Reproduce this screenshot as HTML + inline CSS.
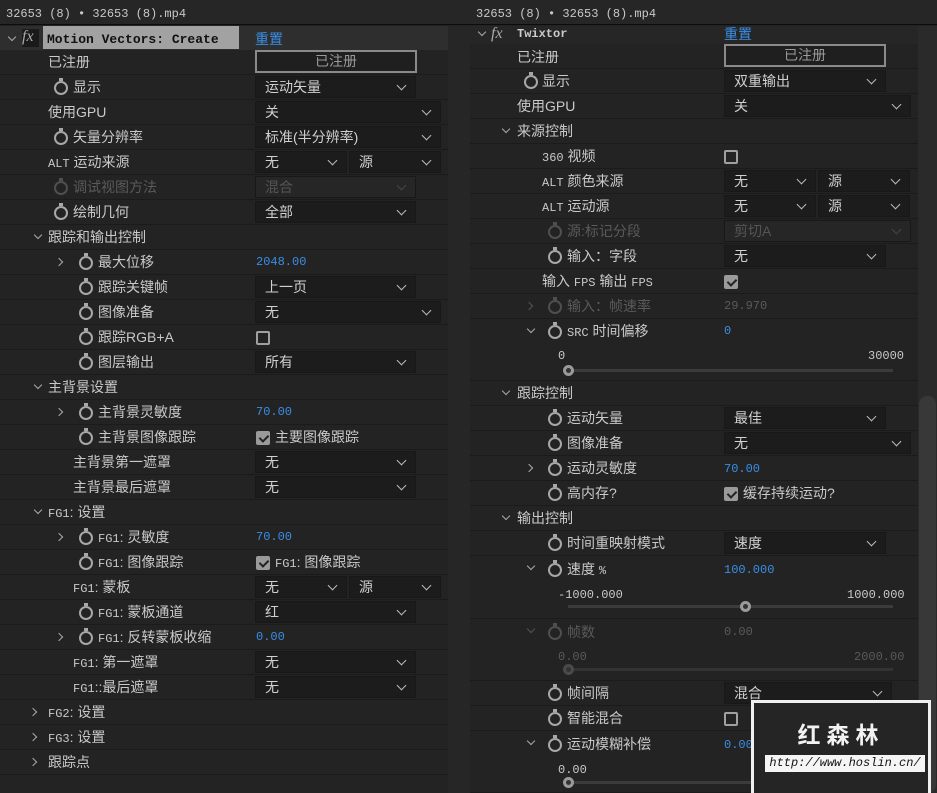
<!DOCTYPE html>
<html><head><meta charset="utf-8"><style>
*{margin:0;padding:0;box-sizing:border-box}
body{width:937px;height:793px;background:#232323;position:relative;overflow:hidden;font-family:"Liberation Sans","Noto Sans CJK SC",sans-serif;font-size:14px;color:#c9c9c9}
.a{position:absolute}
.r{position:absolute;height:25px;border-bottom:1px solid #1b1b1b;background:#232323}
.t{position:absolute;height:24px;line-height:24px;white-space:nowrap}
.m{font-family:"Liberation Mono","Noto Sans CJK SC",monospace;font-size:12px}
.dim{color:#5a5a5a}
.blue{color:#3a8ee6}
.sw{position:absolute;width:14px;height:14px;border:2px solid #a8a8a8;border-radius:50%}
.sw:before{content:"";position:absolute;left:3px;top:-5px;width:4px;height:3px;background:#a8a8a8}
.sw.dim{border-color:#4f4f4f}.sw.dim:before{background:#4f4f4f}
.cd{position:absolute;width:6px;height:6px;border-right:1px solid #aaa;border-bottom:1px solid #aaa;transform:rotate(45deg)}
.cr{position:absolute;width:6px;height:6px;border-right:1px solid #aaa;border-bottom:1px solid #aaa;transform:rotate(-45deg)}
.dd{position:absolute;height:22px;background:#1c1c1c;border:1px solid #181818;line-height:20px;padding-left:9px;color:#d0d0d0}
.dd:after{content:"";position:absolute;right:10px;top:5px;width:6px;height:6px;border-right:1px solid #bbb;border-bottom:1px solid #bbb;transform:rotate(45deg)}
.dd.dim{color:#555;background:#262626}.dd.dim:after{border-color:#444}
.btn{position:absolute;height:23px;border:2px solid #8a8a8a;background:#1f1f1f;text-align:center;line-height:19px;color:#9a9a9a}
.cb{position:absolute;width:14px;height:14px;border:2px solid #a0a0a0;border-radius:2px}
.cb.on{background:#9a9a9a;border-color:#9a9a9a}
.cb.on:after{content:"";position:absolute;left:3px;top:0px;width:4px;height:7px;border-right:2px solid #222;border-bottom:2px solid #222;transform:rotate(45deg)}
.track{position:absolute;height:3px;background:#3b3b3b}
.knob{position:absolute;width:11px;height:11px;border:3px solid #9a9a9a;border-radius:50%;background:#333}
</style></head><body>
<div class="a" style="left:0;top:0;width:937px;height:25px;background:#262626;border-bottom:1px solid #0c0c0c"></div>
<div class="t m" style="left:6px;top:2px;color:#c8c8c8">32653 (8) • 32653 (8).mp4</div>
<div class="t m" style="left:476px;top:2px;color:#c8c8c8">32653 (8) • 32653 (8).mp4</div>
<div class="a" style="left:448px;top:26px;width:22px;height:767px;background:#262626"></div>
<div class="a" style="left:918px;top:26px;width:19px;height:767px;background:#2a2a2a"></div>
<div class="a" style="left:919px;top:396px;width:17px;height:397px;background:#383838;border-radius:8px"></div>

<div class="a" style="left:0;top:26px;width:448px;height:24px;background:#2e2e2e"></div>
<div class="cd" style="left:9px;top:34px"></div>
<div class="a" style="left:22px;top:29px;width:17px;height:18px;background:#1a1a1a;color:#aaa;font-style:italic;font-family:'Liberation Serif',serif;font-size:16px;line-height:16px">fx</div>
<div class="a" style="left:43px;top:26px;width:196px;height:23px;background:#a2a2a2"></div>
<div class="t" style="left:47px;top:28px;color:#111;font-family:'Liberation Mono',monospace;font-weight:bold;font-size:13px">Motion Vectors: Create</div>
<div class="t blue" style="left:255px;top:27px;font-size:14px">重置</div>

<div class="r" style="left:0;top:50px;width:448px"></div>
<div class="r" style="left:0;top:75px;width:448px"></div>
<div class="r" style="left:0;top:100px;width:448px"></div>
<div class="r" style="left:0;top:125px;width:448px"></div>
<div class="r" style="left:0;top:150px;width:448px"></div>
<div class="r" style="left:0;top:175px;width:448px"></div>
<div class="r" style="left:0;top:200px;width:448px"></div>
<div class="r" style="left:0;top:225px;width:448px"></div>
<div class="r" style="left:0;top:250px;width:448px"></div>
<div class="r" style="left:0;top:275px;width:448px"></div>
<div class="r" style="left:0;top:300px;width:448px"></div>
<div class="r" style="left:0;top:325px;width:448px"></div>
<div class="r" style="left:0;top:350px;width:448px"></div>
<div class="r" style="left:0;top:375px;width:448px"></div>
<div class="r" style="left:0;top:400px;width:448px"></div>
<div class="r" style="left:0;top:425px;width:448px"></div>
<div class="r" style="left:0;top:450px;width:448px"></div>
<div class="r" style="left:0;top:475px;width:448px"></div>
<div class="r" style="left:0;top:500px;width:448px"></div>
<div class="r" style="left:0;top:525px;width:448px"></div>
<div class="r" style="left:0;top:550px;width:448px"></div>
<div class="r" style="left:0;top:575px;width:448px"></div>
<div class="r" style="left:0;top:600px;width:448px"></div>
<div class="r" style="left:0;top:625px;width:448px"></div>
<div class="r" style="left:0;top:650px;width:448px"></div>
<div class="r" style="left:0;top:675px;width:448px"></div>
<div class="r" style="left:0;top:700px;width:448px"></div>
<div class="r" style="left:0;top:725px;width:448px"></div>
<div class="r" style="left:0;top:750px;width:448px"></div>

<div class="t" style="left:48px;top:50px">已注册</div><div class="btn" style="left:255px;top:50px;width:162px">已注册</div>
<div class="sw" style="left:54px;top:81px"></div><div class="t" style="left:73px;top:75px">显示</div><div class="dd" style="left:255px;top:76px;width:161px">运动矢量</div>
<div class="t" style="left:48px;top:100px">使用GPU</div><div class="dd" style="left:255px;top:101px;width:186px">关</div>
<div class="sw" style="left:54px;top:131px"></div><div class="t" style="left:73px;top:125px">矢量分辨率</div><div class="dd" style="left:255px;top:126px;width:186px">标准(半分辨率)</div>
<div class="t" style="left:48px;top:150px"><span class="m">ALT</span> 运动来源</div><div class="dd" style="left:255px;top:151px;width:92px">无</div><div class="dd" style="left:349px;top:151px;width:92px">源</div>
<div class="sw dim" style="left:54px;top:181px"></div><div class="t dim" style="left:73px;top:175px">调试视图方法</div><div class="dd dim" style="left:255px;top:176px;width:161px">混合</div>
<div class="sw" style="left:54px;top:206px"></div><div class="t" style="left:73px;top:200px">绘制几何</div><div class="dd" style="left:255px;top:201px;width:161px">全部</div>
<div class="cd" style="left:35px;top:232px"></div><div class="t" style="left:48px;top:225px">跟踪和输出控制</div>
<div class="cr" style="left:56px;top:259px"></div><div class="sw" style="left:79px;top:256px"></div><div class="t" style="left:98px;top:250px">最大位移</div><div class="t blue m" style="left:256px;top:250px">2048.00</div>
<div class="sw" style="left:79px;top:281px"></div><div class="t" style="left:98px;top:275px">跟踪关键帧</div><div class="dd" style="left:255px;top:276px;width:161px">上一页</div>
<div class="sw" style="left:79px;top:306px"></div><div class="t" style="left:98px;top:300px">图像准备</div><div class="dd" style="left:255px;top:301px;width:186px">无</div>
<div class="sw" style="left:79px;top:331px"></div><div class="t" style="left:98px;top:325px">跟踪RGB+A</div><div class="cb" style="left:256px;top:331px"></div>
<div class="sw" style="left:79px;top:356px"></div><div class="t" style="left:98px;top:350px">图层输出</div><div class="dd" style="left:255px;top:351px;width:161px">所有</div>
<div class="cd" style="left:35px;top:382px"></div><div class="t" style="left:48px;top:375px">主背景设置</div>
<div class="cr" style="left:56px;top:409px"></div><div class="sw" style="left:79px;top:406px"></div><div class="t" style="left:98px;top:400px">主背景灵敏度</div><div class="t blue m" style="left:256px;top:400px">70.00</div>
<div class="sw" style="left:79px;top:431px"></div><div class="t" style="left:98px;top:425px">主背景图像跟踪</div><div class="cb on" style="left:256px;top:431px"></div><div class="t" style="left:275px;top:425px">主要图像跟踪</div>
<div class="t" style="left:73px;top:450px">主背景第一遮罩</div><div class="dd" style="left:255px;top:451px;width:161px">无</div>
<div class="t" style="left:73px;top:475px">主背景最后遮罩</div><div class="dd" style="left:255px;top:476px;width:161px">无</div>
<div class="cd" style="left:35px;top:507px"></div><div class="t" style="left:48px;top:500px"><span class="m">FG1</span>: 设置</div>
<div class="cr" style="left:56px;top:534px"></div><div class="sw" style="left:79px;top:531px"></div><div class="t" style="left:98px;top:525px"><span class="m">FG1</span>: 灵敏度</div><div class="t blue m" style="left:256px;top:525px">70.00</div>
<div class="sw" style="left:79px;top:556px"></div><div class="t" style="left:98px;top:550px"><span class="m">FG1</span>: 图像跟踪</div><div class="cb on" style="left:256px;top:556px"></div><div class="t" style="left:275px;top:550px"><span class="m">FG1</span>: 图像跟踪</div>
<div class="t" style="left:73px;top:575px"><span class="m">FG1</span>: 蒙板</div><div class="dd" style="left:255px;top:576px;width:92px">无</div><div class="dd" style="left:349px;top:576px;width:92px">源</div>
<div class="sw" style="left:79px;top:606px"></div><div class="t" style="left:98px;top:600px"><span class="m">FG1</span>: 蒙板通道</div><div class="dd" style="left:255px;top:601px;width:161px">红</div>
<div class="cr" style="left:56px;top:634px"></div><div class="sw" style="left:79px;top:631px"></div><div class="t" style="left:98px;top:625px"><span class="m">FG1</span>: 反转蒙板收缩</div><div class="t blue m" style="left:256px;top:625px">0.00</div>
<div class="t" style="left:73px;top:650px"><span class="m">FG1</span>: 第一遮罩</div><div class="dd" style="left:255px;top:651px;width:161px">无</div>
<div class="t" style="left:73px;top:675px"><span class="m">FG1</span>::最后遮罩</div><div class="dd" style="left:255px;top:676px;width:161px">无</div>
<div class="cr" style="left:30px;top:709px"></div><div class="t" style="left:48px;top:700px"><span class="m">FG2</span>: 设置</div>
<div class="cr" style="left:30px;top:734px"></div><div class="t" style="left:48px;top:725px"><span class="m">FG3</span>: 设置</div>
<div class="cr" style="left:30px;top:759px"></div><div class="t" style="left:48px;top:750px">跟踪点</div>

<div class="a" style="left:470px;top:26px;width:448px;height:18px;background:#262626"></div>
<div class="cd" style="left:479px;top:29px"></div>
<div class="a" style="left:491px;top:26px;width:16px;height:16px;color:#aaa;font-style:italic;font-family:'Liberation Serif',serif;font-size:16px;line-height:15px">fx</div>
<div class="a" style="left:517px;top:25px;height:18px;line-height:18px;color:#ccc;font-family:'Liberation Mono',monospace;font-weight:bold;font-size:12px">Twixtor</div>
<div class="a blue" style="left:724px;top:24px;font-size:14px;line-height:20px">重置</div>

<div class="r" style="left:470px;top:44px;width:448px"></div>
<div class="r" style="left:470px;top:69px;width:448px"></div>
<div class="r" style="left:470px;top:94px;width:448px"></div>
<div class="r" style="left:470px;top:119px;width:448px"></div>
<div class="r" style="left:470px;top:144px;width:448px"></div>
<div class="r" style="left:470px;top:169px;width:448px"></div>
<div class="r" style="left:470px;top:194px;width:448px"></div>
<div class="r" style="left:470px;top:219px;width:448px"></div>
<div class="r" style="left:470px;top:244px;width:448px"></div>
<div class="r" style="left:470px;top:269px;width:448px"></div>
<div class="r" style="left:470px;top:294px;width:448px"></div>
<div class="r" style="left:470px;top:319px;width:448px;height:62px"></div>
<div class="r" style="left:470px;top:381px;width:448px"></div>
<div class="r" style="left:470px;top:406px;width:448px"></div>
<div class="r" style="left:470px;top:431px;width:448px"></div>
<div class="r" style="left:470px;top:456px;width:448px"></div>
<div class="r" style="left:470px;top:481px;width:448px"></div>
<div class="r" style="left:470px;top:506px;width:448px"></div>
<div class="r" style="left:470px;top:531px;width:448px"></div>
<div class="r" style="left:470px;top:556px;width:448px;height:63px"></div>
<div class="r" style="left:470px;top:619px;width:448px;height:62px"></div>
<div class="r" style="left:470px;top:681px;width:448px"></div>
<div class="r" style="left:470px;top:706px;width:448px"></div>
<div class="r" style="left:470px;top:731px;width:448px;height:62px"></div>

<div class="t" style="left:517px;top:45px">已注册</div><div class="btn" style="left:724px;top:44px;width:162px">已注册</div>
<div class="sw" style="left:524px;top:75px"></div><div class="t" style="left:542px;top:69px">显示</div><div class="dd" style="left:724px;top:70px;width:162px">双重输出</div>
<div class="t" style="left:517px;top:94px">使用GPU</div><div class="dd" style="left:724px;top:95px;width:187px">关</div>
<div class="cd" style="left:503px;top:126px"></div><div class="t" style="left:517px;top:119px">来源控制</div>
<div class="t" style="left:542px;top:144px"><span class="m">360</span> 视频</div><div class="cb" style="left:724px;top:150px"></div>
<div class="t" style="left:542px;top:169px"><span class="m">ALT</span> 颜色来源</div><div class="dd" style="left:724px;top:170px;width:92px">无</div><div class="dd" style="left:818px;top:170px;width:92px">源</div>
<div class="t" style="left:542px;top:194px"><span class="m">ALT</span> 运动源</div><div class="dd" style="left:724px;top:195px;width:92px">无</div><div class="dd" style="left:818px;top:195px;width:92px">源</div>
<div class="sw dim" style="left:548px;top:225px"></div><div class="t dim" style="left:567px;top:219px">源:标记分段</div><div class="dd dim" style="left:724px;top:220px;width:187px">剪切A</div>
<div class="sw" style="left:548px;top:250px"></div><div class="t" style="left:567px;top:244px">输入：字段</div><div class="dd" style="left:724px;top:245px;width:162px">无</div>
<div class="t" style="left:542px;top:269px">输入 <span class="m">FPS</span> 输出 <span class="m">FPS</span></div><div class="cb on" style="left:724px;top:275px"></div>
<div class="cr" style="left:526px;top:303px;border-color:#555"></div><div class="sw dim" style="left:548px;top:300px"></div><div class="t dim" style="left:567px;top:294px">输入：帧速率</div><div class="t dim m" style="left:724px;top:294px">29.970</div>
<div class="cd" style="left:528px;top:326px"></div><div class="sw" style="left:548px;top:325px"></div><div class="t" style="left:567px;top:319px"><span class="m">SRC</span> 时间偏移</div><div class="t blue m" style="left:724px;top:319px">0</div>
<div class="t m" style="left:558px;top:344px">0</div><div class="t m" style="left:868px;top:344px">30000</div>
<div class="track" style="left:568px;top:369px;width:325px"></div><div class="knob" style="left:563px;top:365px"></div>
<div class="cd" style="left:503px;top:388px"></div><div class="t" style="left:517px;top:381px">跟踪控制</div>
<div class="sw" style="left:548px;top:412px"></div><div class="t" style="left:567px;top:406px">运动矢量</div><div class="dd" style="left:724px;top:407px;width:162px">最佳</div>
<div class="sw" style="left:548px;top:437px"></div><div class="t" style="left:567px;top:431px">图像准备</div><div class="dd" style="left:724px;top:432px;width:187px">无</div>
<div class="cr" style="left:526px;top:465px"></div><div class="sw" style="left:548px;top:462px"></div><div class="t" style="left:567px;top:456px">运动灵敏度</div><div class="t blue m" style="left:724px;top:457px">70.00</div>
<div class="sw" style="left:548px;top:487px"></div><div class="t" style="left:567px;top:481px">高内存?</div><div class="cb on" style="left:724px;top:487px"></div><div class="t" style="left:743px;top:481px">缓存持续运动?</div>
<div class="cd" style="left:503px;top:513px"></div><div class="t" style="left:517px;top:506px">输出控制</div>
<div class="sw" style="left:548px;top:537px"></div><div class="t" style="left:567px;top:531px">时间重映射模式</div><div class="dd" style="left:724px;top:532px;width:162px">速度</div>
<div class="cd" style="left:528px;top:563px"></div><div class="sw" style="left:548px;top:563px"></div><div class="t" style="left:567px;top:557px">速度 <span class="m">%</span></div><div class="t blue m" style="left:724px;top:558px">100.000</div>
<div class="t m" style="left:558px;top:583px">-1000.000</div><div class="t m" style="left:847px;top:583px">1000.000</div>
<div class="track" style="left:568px;top:605px;width:325px"></div><div class="knob" style="left:740px;top:601px"></div>
<div class="cd" style="left:528px;top:626px;border-color:#555"></div><div class="sw dim" style="left:548px;top:626px"></div><div class="t dim" style="left:567px;top:620px">帧数</div><div class="t dim m" style="left:724px;top:620px">0.00</div>
<div class="t dim m" style="left:558px;top:645px">0.00</div><div class="t dim m" style="left:854px;top:645px">2000.00</div>
<div class="track" style="left:568px;top:668px;width:325px;background:#333"></div><div class="knob" style="left:563px;top:664px;border-color:#4a4a4a"></div>
<div class="sw" style="left:548px;top:687px"></div><div class="t" style="left:567px;top:681px">帧间隔</div><div class="dd" style="left:724px;top:682px;width:168px">混合</div>
<div class="sw" style="left:548px;top:712px"></div><div class="t" style="left:567px;top:706px">智能混合</div><div class="cb" style="left:724px;top:712px"></div>
<div class="cd" style="left:528px;top:738px"></div><div class="sw" style="left:548px;top:738px"></div><div class="t" style="left:567px;top:732px">运动模糊补偿</div><div class="t blue m" style="left:724px;top:733px">0.00</div>
<div class="t m" style="left:558px;top:758px">0.00</div>
<div class="track" style="left:568px;top:781px;width:325px"></div><div class="knob" style="left:563px;top:777px"></div>

<div class="a" style="left:751px;top:700px;width:180px;height:93px;background:#252525;border:3px solid #f0f0f0;border-bottom:none"></div>
<div class="a" style="left:751px;top:718px;width:180px;text-align:center;color:#f2f2f2;font-weight:bold;font-size:23px;letter-spacing:6px;font-family:'Noto Sans CJK SC',sans-serif;line-height:30px">红森林</div>
<div class="a" style="left:765px;top:755px;width:160px;height:17px;background:#f5f5f5;color:#111;font-style:italic;font-family:'Liberation Mono',monospace;font-size:12px;line-height:17px;text-align:center">http://www.hoslin.cn/</div>
</body></html>
